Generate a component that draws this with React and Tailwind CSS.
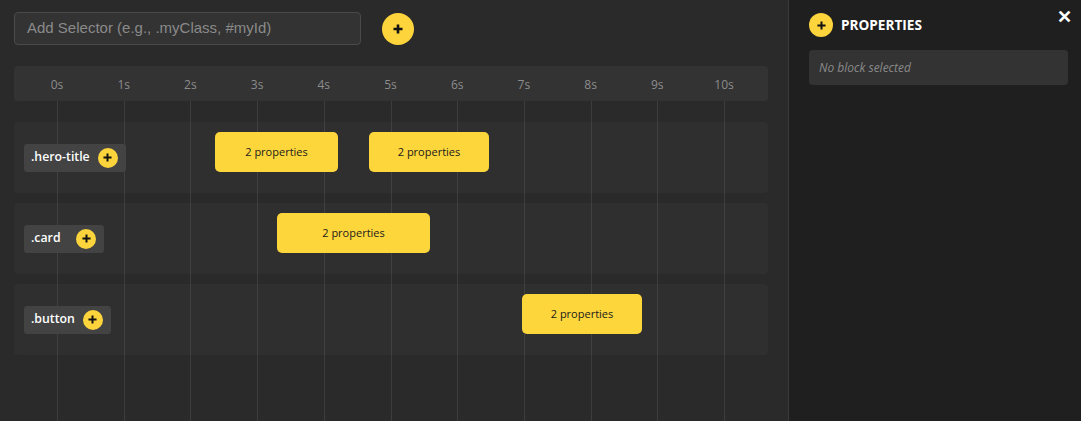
import React from "react";

const ticks = ["0s", "1s", "2s", "3s", "4s", "5s", "6s", "7s", "8s", "9s", "10s"];

const rows = [
  { name: ".hero-title", blocks: [{ left: 201, width: 123 }, { left: 355, width: 120 }] },
  { name: ".card", blocks: [{ left: 263, width: 153 }] },
  { name: ".button", blocks: [{ left: 508, width: 120 }] },
];

function Plus({ size = 10, stroke = 2.6 }) {
  return (
    <svg width={size} height={size} viewBox="0 0 10 10">
      <path d="M5 0.5V9.5M0.5 5H9.5" stroke="#111" strokeWidth={stroke} />
    </svg>
  );
}

export default function App() {
  return (
    <div
      className="w-[1081px] h-[421px] flex overflow-hidden bg-[#2a2a2a]"
      style={{ fontFamily: '"Open Sans", "Noto Sans", sans-serif' }}
    >
      {/* timeline side */}
      <div className="w-[788px] shrink-0 flex flex-col pl-[14px] pr-[20px] pt-[12px]">
        <div className="flex items-center">
          <div
            className="w-[347px] h-[33px] rounded-[4px] border border-[#4a4a4a] bg-[#333333] flex items-center px-3 text-[15px] text-[#8a8a8a]"
            style={{ fontFamily: '"Liberation Sans", Arial, sans-serif' }}
          >
            Add Selector (e.g., .myClass, #myId)
          </div>
          <button className="ml-[21px] w-[32px] h-[32px] rounded-full bg-[#fdd43c] flex items-center justify-center">
            <Plus size={10} stroke={2.6} />
          </button>
        </div>

        <div className="relative mt-[21px] flex-1">
          <div className="h-[35px] rounded-[4px] bg-[#333333] relative">
            {ticks.map((t, i) => (
              <span
                key={t}
                className="absolute top-[10px] -translate-x-1/2 text-[12px] text-[#8c8c8c]"
                style={{ left: 43 + i * 66.7 }}
              >
                {t}
              </span>
            ))}
          </div>

          {/* grid lines */}
          {ticks.map((t, i) => (
            <div
              key={t}
              className="absolute top-[35px] bottom-0 w-px bg-[#3d3d3d]"
              style={{ left: 43 + i * 66.7 }}
            />
          ))}

          <div className="relative mt-[21px] flex flex-col gap-[10px]">
            {rows.map((r) => (
              <div key={r.name} className="relative h-[71px] rounded-[4px] bg-white/[0.025] flex items-center pl-[10px]">
                <div className="relative z-10 h-[28px] rounded-[3px] bg-[#434343] flex items-center pl-[7px] pr-[8px] gap-[8px]">
                  <span className="min-w-[37px] text-[12.3px] font-semibold text-white">{r.name}</span>
                  <span className="w-[20px] h-[20px] rounded-full bg-[#fdd43c] flex items-center justify-center">
                    <Plus size={9} stroke={2.2} />
                  </span>
                </div>
                {r.blocks.map((b, j) => (
                  <div
                    key={j}
                    className="absolute top-[10px] h-[40px] rounded-[5px] bg-[#fdd63c] flex items-center justify-center text-[11px] text-[#1a1a1a]"
                    style={{ left: b.left, width: b.width }}
                  >
                    2 properties
                  </div>
                ))}
              </div>
            ))}
          </div>
        </div>
      </div>

      {/* properties panel */}
      <div className="flex-1 bg-[#1f1f1f] border-l border-[#3a3a3a] pl-[20px] pr-[13px] pt-[13px] relative">
        <span className="absolute right-[9px] top-[3px] text-white text-[18px] font-bold">✕</span>
        <div className="flex items-center gap-[8px]">
          <span className="w-[24px] h-[24px] rounded-full bg-[#fdd43c] flex items-center justify-center">
            <Plus size={9} stroke={2.2} />
          </span>
          <span className="text-white text-[13.6px] font-bold">PROPERTIES</span>
        </div>
        <div className="mt-[13px] h-[35px] rounded-[4px] bg-[#333333] flex items-center px-[10px] text-[12px] italic text-[#8a8a8a]">
          No block selected
        </div>
      </div>
    </div>
  );
}
